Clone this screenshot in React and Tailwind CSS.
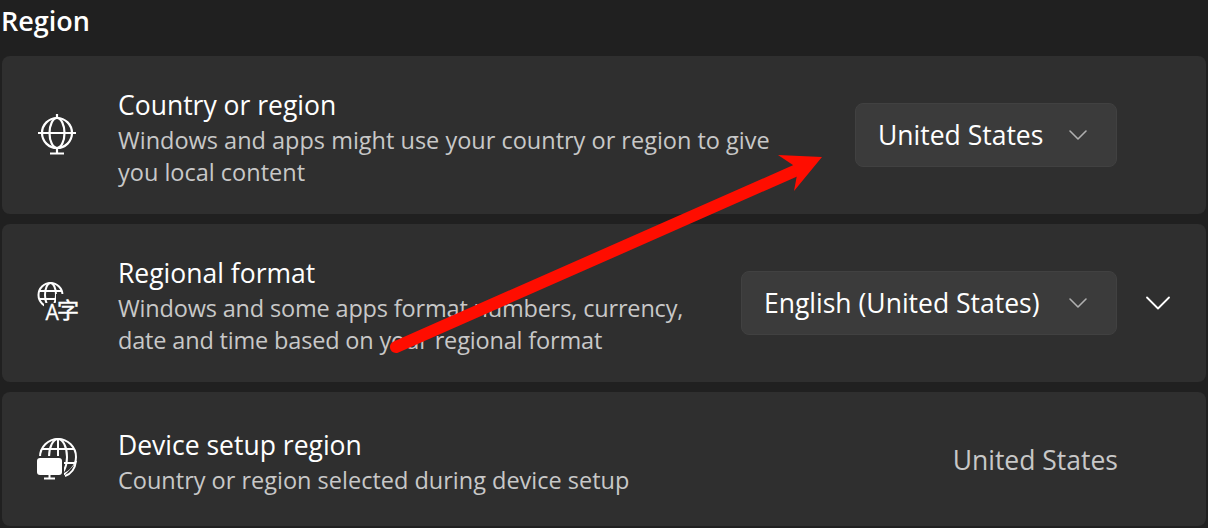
import { ChevronDown } from 'lucide-react';

const font = { fontFamily: '"Open Sans", "Noto Sans", sans-serif' };

/* ── Icons ── */
function GlobeStandIcon() {
  return (
    <svg width="44" height="44" viewBox="0 0 44 44" fill="none" stroke="white" strokeWidth="2.2">
      <circle cx="22" cy="20" r="15" />
      <ellipse cx="22" cy="20" rx="7.5" ry="15" />
      <path d="M3 20H41M22 1V5M22 35V40M15 40.5H29" />
    </svg>
  );
}

function LanguageIcon() {
  return (
    <svg width="44" height="44" viewBox="0 0 44 44" fill="none" stroke="white" strokeWidth="2">
      <circle cx="15.5" cy="14" r="12" />
      <ellipse cx="15.5" cy="14" rx="5.5" ry="12" />
      <path d="M4 10H27M4 18H27" />
      <rect x="21" y="13" width="23" height="27" fill="#2f2f2f" stroke="none" />
      <rect x="9" y="22" width="18" height="18" fill="#2f2f2f" stroke="none" />
      <text x="10.5" y="39" fill="white" stroke="white" strokeWidth="0.3" fontSize="21" fontFamily='"Open Sans", sans-serif'>A</text>
      <text x="22" y="37" fill="white" stroke="white" strokeWidth="0.5" fontSize="22" fontFamily='"Noto Sans CJK SC", sans-serif'>字</text>
    </svg>
  );
}

function GlobeDeviceIcon() {
  return (
    <svg width="44" height="44" viewBox="0 0 44 44" fill="none" stroke="white" strokeWidth="2">
      <circle cx="23" cy="20" r="18" />
      <ellipse cx="23" cy="20" rx="9" ry="18" />
      <path d="M7 12H39M5 26H41M23 2V20" />
      <path d="M29 39L41 26V39Z" fill="#2f2f2f" stroke="none" />
      <path d="M30 39C36 37 40 32 41 24" />
      <rect x="0" y="19" width="29" height="24" fill="#2f2f2f" stroke="none" />
      <rect x="2" y="21" width="25" height="17" rx="3" fill="white" stroke="none" />
      <path d="M14.5 38V41M9 41.5H20" />
    </svg>
  );
}

/* ── Dropdown ── */
function Dropdown({ label, width }) {
  return (
    <div className={`${width} h-16 flex items-center justify-between pl-[22px] pr-[22px] rounded-lg bg-[#3b3b3b] border border-[#414141] text-[26.5px] text-white`}>
      <span className="mt-[2px]">{label}</span>
      <ChevronDown className="w-[32px] h-[32px] text-[#b0b0b0]" strokeWidth={1.2} />
    </div>
  );
}

/* ── Row ── */
function Row({ icon, title, lines, height, tight, children }) {
  return (
    <div className={`${height} relative flex items-center pl-[33px] pr-[89px] rounded-lg bg-[#2f2f2f]`}>
      <div className="w-[44px] shrink-0">{icon}</div>
      <div className="ml-[39px] flex-1 pt-[4px]">
        <div className="text-[26.5px] leading-[38px] text-white">{title}</div>
        {lines.map(l => (
          <div key={l} className={`text-[23.5px] leading-[32px] text-[#c8c8c8] ${tight ? 'tracking-[-0.17px]' : ''}`}>{l}</div>
        ))}
      </div>
      {children}
    </div>
  );
}

export default function App() {
  return (
    <div className="relative w-[1208px] h-[528px] overflow-hidden bg-[#202020] px-[2px]" style={font}>
      <div className="h-[46px] -ml-[1px] -mt-[2px] flex items-center text-[27px] font-semibold text-white">Region</div>
      <div className="mt-[12px] flex flex-col gap-[10px]">
        <Row
          height="h-[158px]"
          icon={<GlobeStandIcon />}
          title="Country or region"
          lines={['Windows and apps might use your country or region to give', 'you local content']}
        >
          <Dropdown label="United States" width="w-[262px]" />
        </Row>
        <Row
          height="h-[158px]"
          tight
          icon={<LanguageIcon />}
          title="Regional format"
          lines={['Windows and some apps format numbers, currency,', 'date and time based on your regional format']}
        >
          <Dropdown label="English (United States)" width="w-[376px]" />
          <ChevronDown className="absolute right-[26px] top-[57px] w-[44px] h-[44px] text-white" strokeWidth={1} />
        </Row>
        <Row
          height="h-[134px]"
          icon={<GlobeDeviceIcon />}
          title="Device setup region"
          lines={['Country or region selected during device setup']}
        >
          <span className="mt-[4px] -mr-[1px] text-[26.5px] text-[#c8c8c8]">United States</span>
        </Row>
      </div>
      {/* red annotation arrow */}
      <svg className="absolute left-0 top-0 pointer-events-none" width="1208" height="528" viewBox="0 0 1208 528">
        <path d="M396 347L797 170" stroke="#ff0d00" strokeWidth="12" strokeLinecap="round" />
        <path d="M822 157L778 155L793 165L797 175L794 191Z" fill="#ff0d00" />
      </svg>
    </div>
  );
}
